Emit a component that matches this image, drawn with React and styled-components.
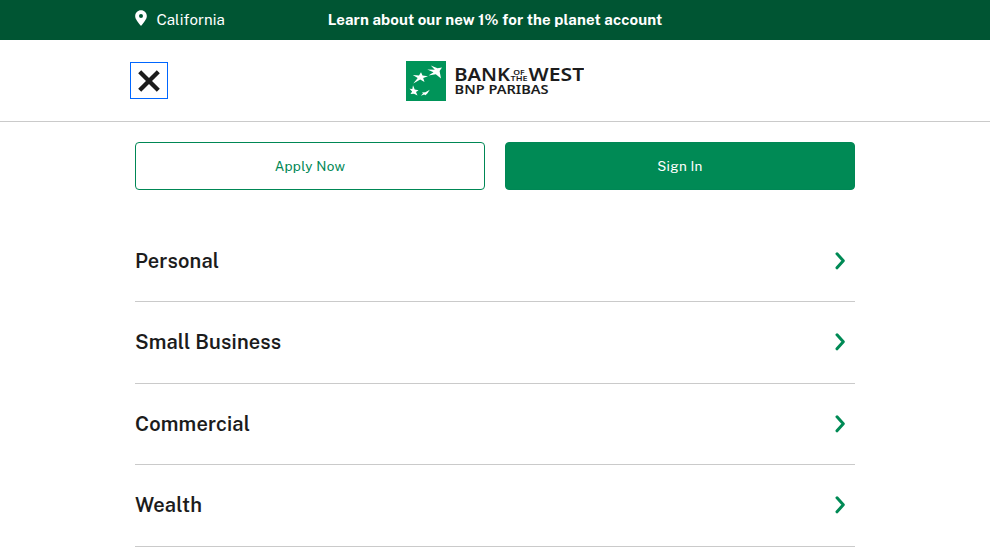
import React from "react";
import styled, { createGlobalStyle } from "styled-components";

const GlobalStyle = createGlobalStyle`
  * { box-sizing: border-box; }
  html { overflow: hidden; }
  body {
    margin: 0;
    background: #fff;
    color: #1c1c1c;
    font-family: "Public Sans", Inter, sans-serif;
    -webkit-font-smoothing: antialiased;
  }
  button { font-family: inherit; cursor: pointer; }
  a { color: inherit; text-decoration: none; }
`;

const Page = styled.div`
  height: 558px;
  overflow: hidden;
`;

const PromoBar = styled.div`
  height: 40px;
  padding: 0 135px;
  background: #005533;
  color: #fff;
  display: grid;
  grid-template-columns: 1fr auto 1fr;
  align-items: center;
`;

const Location = styled.a`
  display: flex;
  align-items: center;
  gap: 9.4px;
  font-size: 15px;
  line-height: 20px;
  letter-spacing: 0.1px;

  svg { margin-bottom: 4px; }
`;

const PromoLink = styled.a`
  font-size: 15px;
  line-height: 20px;
  font-weight: 700;
  letter-spacing: 0.1px;
  white-space: nowrap;
`;

const Header = styled.header`
  height: 82px;
  padding: 0 130px;
  border-bottom: 1px solid #cacaca;
  display: grid;
  grid-template-columns: 1fr auto 1fr;
  align-items: center;
`;

const CloseButton = styled.button`
  width: 38px;
  height: 37px;
  padding: 0;
  border: 1px solid #0066ff;
  background: #fff;
  display: flex;
  align-items: center;
  justify-content: center;
`;

const Logo = styled.a`
  display: block;
  height: 40px;
`;

const Content = styled.main`
  width: 720px;
  margin: 0 auto;
  padding-top: 20px;
`;

const Actions = styled.div`
  display: grid;
  grid-template-columns: 1fr 1fr;
  gap: 20px;
`;

const ActionButton = styled.button`
  height: 48px;
  padding: 0;
  border: 1px solid #008755;
  border-radius: 4px;
  background: ${({ $filled }) => ($filled ? "#008a55" : "#fff")};
  color: ${({ $filled }) => ($filled ? "#fff" : "#008755")};
  font-size: 13.5px;
  line-height: 20px;
  letter-spacing: 0.28px;
`;

const Menu = styled.nav`
  padding-top: 30.6px;
`;

const MenuRow = styled.a`
  height: 81.5px;
  padding-right: 9px;
  border-bottom: 1px solid #cacaca;
  display: flex;
  align-items: center;
  justify-content: space-between;
`;

const MenuLabel = styled.span`
  font-size: 20px;
  line-height: 28px;
  font-weight: 600;
  letter-spacing: 0.15px;
`;

const sections = ["Personal", "Small Business", "Commercial", "Wealth"];

const PinIcon = () => (
  <svg width="12" height="16" viewBox="0 0 12 16" aria-hidden="true">
    <path
      fill="#fff"
      fillRule="evenodd"
      d="M6 .3C2.8.3.2 2.8.2 5.9c0 2.6 1.2 3.9 5.1 9.4.3.5 1.1.5 1.4 0 3.9-5.5 5.1-6.8 5.1-9.4C11.8 2.8 9.2.3 6 .3Zm0 3.6a2 2 0 1 1 0 4 2 2 0 0 1 0-4Z"
    />
  </svg>
);

const CloseIcon = () => (
  <svg width="22" height="22" viewBox="0 0 22 22" aria-hidden="true">
    <path d="M1.7 1.7 20.3 20.3M20.3 1.7 1.7 20.3" stroke="#1c1c1c" strokeWidth="4.3" />
  </svg>
);

const ChevronIcon = () => (
  <svg width="11" height="18" viewBox="0 0 11 18" aria-hidden="true">
    <path
      d="M2 1.8 8.3 8.8 2 15.8"
      fill="none"
      stroke="#008a55"
      strokeWidth="3"
      strokeLinecap="round"
      strokeLinejoin="round"
    />
  </svg>
);

const BankLogo = () => (
  <svg width="178" height="40" viewBox="0 0 178 40" role="img" aria-label="Bank of the West BNP Paribas">
    <rect width="40" height="40" fill="#009459" />
    <g fill="#fff">
      <path d="M36 6.5 33.6 10 35 17.4 29.8 13.3 22.5 14.6 27.5 11.2 21.3 8.6 28.8 8.7 24.8 4.4 31.5 7.2Z" />
      <path d="M15 11.2 16.5 14.6 22 15.3 17.2 16.9 18.5 21 14.2 18.4 7.3 22.4 11.7 17 6.8 14.1 13 14.5Z" />
      <path d="M7 24.3 8.7 28.4 12.5 29.3 10 31.1 11.5 34.6 8 32.8 4.5 33 6.1 30.5 3.5 27.8 6.3 28.1Z" />
      <path d="M23.8 28.7 21.3 32.6 19.4 34.2 18.2 33.6 14.8 34.7 17 32.6 16 31.5 19.4 31.3Z" />
    </g>
    <g fill="#1c1c1c" fontFamily='"Noto Sans", sans-serif' fontWeight="700">
      <text x="48.2" y="20.2" fontSize="17.9" fontWeight="650" textLength="55.8" lengthAdjust="spacingAndGlyphs">BANK</text>
      <text x="107.2" y="13.6" fontSize="7.8" fontWeight="600" textLength="11.5" lengthAdjust="spacingAndGlyphs">OF</text>
      <text x="104.5" y="20.2" fontSize="7.8" fontWeight="600" textLength="17" lengthAdjust="spacingAndGlyphs">THE</text>
      <text x="122.6" y="20.2" fontSize="17.9" fontWeight="650" textLength="55.6" lengthAdjust="spacingAndGlyphs">WEST</text>
      <text x="48.6" y="33" fontSize="12.3" fontWeight="650" textLength="94" lengthAdjust="spacingAndGlyphs">BNP PARIBAS</text>
    </g>
  </svg>
);

export default function App() {
  return (
    <Page>
      <GlobalStyle />
      <PromoBar>
        <Location href="#">
          <PinIcon />
          California
        </Location>
        <PromoLink href="#">Learn about our new 1% for the planet account</PromoLink>
      </PromoBar>
      <Header>
        <CloseButton aria-label="Close menu">
          <CloseIcon />
        </CloseButton>
        <Logo href="#">
          <BankLogo />
        </Logo>
      </Header>
      <Content>
        <Actions>
          <ActionButton>Apply Now</ActionButton>
          <ActionButton $filled>Sign In</ActionButton>
        </Actions>
        <Menu>
          {sections.map((name) => (
            <MenuRow href="#" key={name}>
              <MenuLabel>{name}</MenuLabel>
              <ChevronIcon />
            </MenuRow>
          ))}
        </Menu>
      </Content>
    </Page>
  );
}
